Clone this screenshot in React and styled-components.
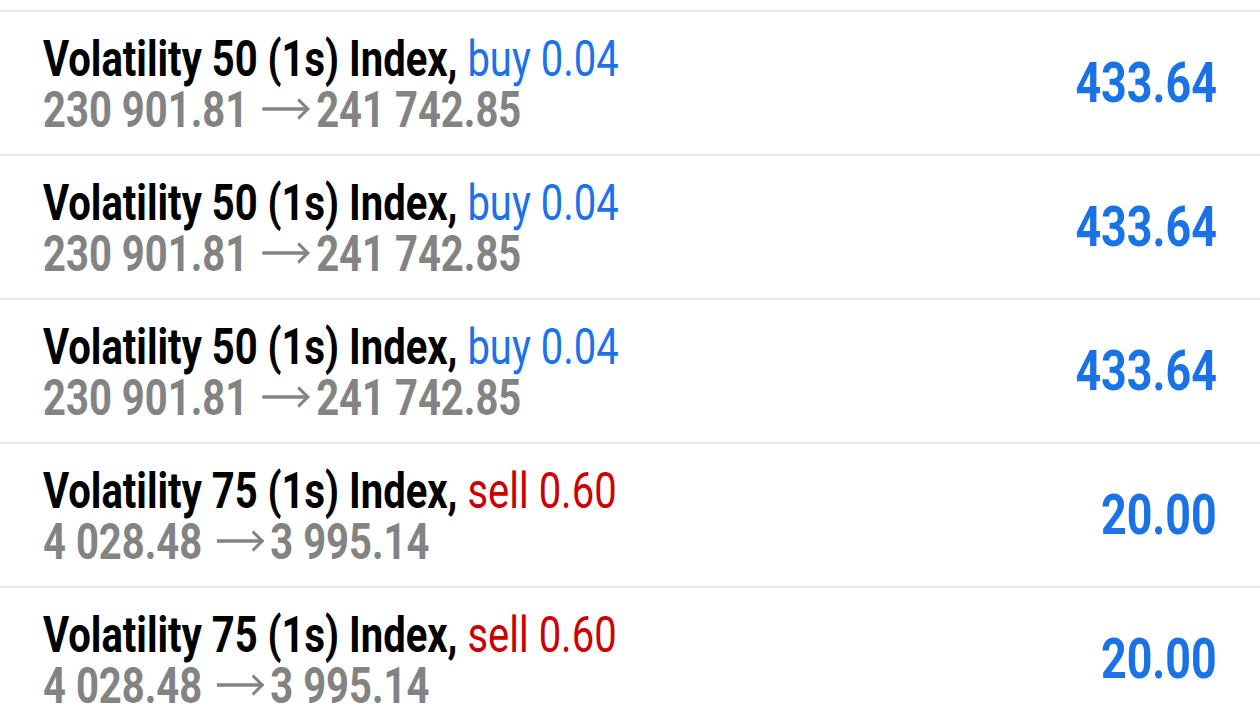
import React from "react";
import styled, { createGlobalStyle } from "styled-components";

const GlobalStyle = createGlobalStyle`
  html, body {
    margin: 0;
    padding: 0;
    background: #fff;
    font-family: Roboto, "Liberation Sans", sans-serif;
  }
`;

const List = styled.div`
  padding-top: 10px;
  background: #fff;
  overflow: hidden;
  height: 698px;
`;

const Row = styled.div`
  display: flex;
  align-items: center;
  justify-content: space-between;
  height: 142px;
  border-top: 2px solid #e8e8e8;
  padding: 0 43px 0 43px;
`;

const Info = styled.div`
  display: flex;
  flex-direction: column;
  padding-top: 3px;
`;

const Line = styled.div`
  font-size: 50px;
  line-height: 51px;
  white-space: nowrap;
  transform: scaleX(0.8);
  transform-origin: left center;
`;

const Symbol = styled.span`
  font-weight: 700;
  color: #000;
`;

const Side = styled.span`
  font-weight: 400;
  color: ${p => (p.type === "sell" ? "#cc0000" : "#1a73e8")};
`;

const Prices = styled(Line)`
  font-weight: 700;
  color: #838383;
`;

const Arrow = styled.svg`
  display: inline-block;
  width: 60px;
  height: 22px;
  margin: 0 7px 0 18px;
  vertical-align: 7px;
`;

const Profit = styled.div`
  font-size: 56px;
  font-weight: 700;
  color: #1a72e6;
  white-space: nowrap;
  transform: scaleX(0.8);
  transform-origin: right center;
`;

const trades = [
  { symbol: "Volatility 50 (1s) Index", type: "buy", volume: "0.04", open: "230 901.81", close: "241 742.85", profit: "433.64" },
  { symbol: "Volatility 50 (1s) Index", type: "buy", volume: "0.04", open: "230 901.81", close: "241 742.85", profit: "433.64" },
  { symbol: "Volatility 50 (1s) Index", type: "buy", volume: "0.04", open: "230 901.81", close: "241 742.85", profit: "433.64" },
  { symbol: "Volatility 75 (1s) Index", type: "sell", volume: "0.60", open: "4 028.48", close: "3 995.14", profit: "20.00" },
  { symbol: "Volatility 75 (1s) Index", type: "sell", volume: "0.60", open: "4 028.48", close: "3 995.14", profit: "20.00" },
];

const ArrowIcon = () => (
  <Arrow viewBox="0 0 60 22" aria-label="→">
    <path d="M0 11 H57" stroke="#838383" strokeWidth="3.5" fill="none" />
    <path d="M45 1.5 L57 11 L45 20.5" stroke="#838383" strokeWidth="3.5" fill="none" strokeLinejoin="miter" />
  </Arrow>
);

export default function App() {
  return (
    <>
      <GlobalStyle />
      <List>
        {trades.map((t, i) => (
          <Row key={i}>
            <Info>
              <Line>
                <Symbol>{t.symbol},</Symbol> <Side type={t.type}>{t.type} {t.volume}</Side>
              </Line>
              <Prices>
                {t.open}
                <ArrowIcon />
                {t.close}
              </Prices>
            </Info>
            <Profit>{t.profit}</Profit>
          </Row>
        ))}
      </List>
    </>
  );
}
